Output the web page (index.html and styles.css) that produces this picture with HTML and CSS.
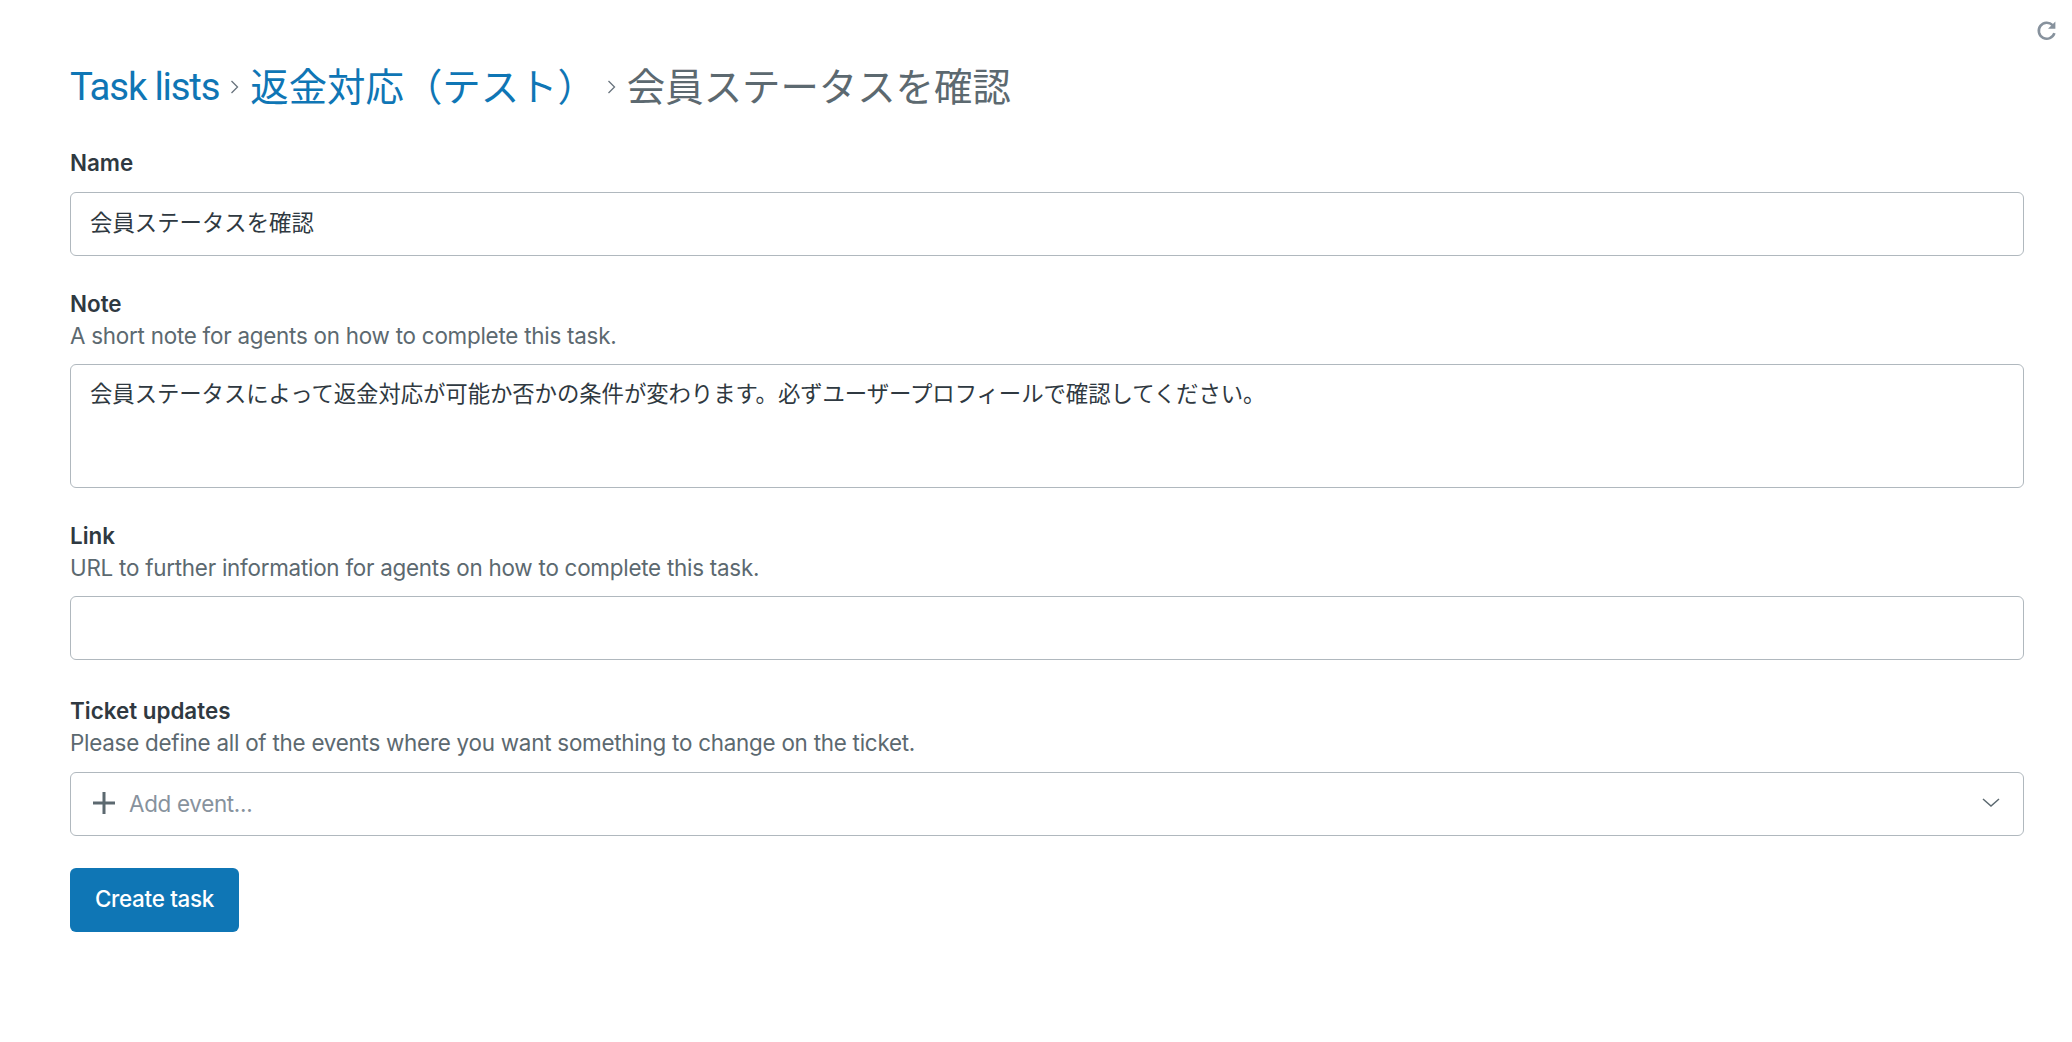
FILE: index.html
```html
<!DOCTYPE html>
<html lang="ja">
<head>
<meta charset="utf-8">
<title>会員ステータスを確認</title>
<link rel="stylesheet" href="styles.css">
</head>
<body>
<button class="refresh" type="button" aria-label="Refresh">
  <svg width="22" height="22" viewBox="0 0 22 22" fill="none" stroke="#87929d" stroke-width="2.6"><path d="M18.4 13.2A8 8 0 1 1 16.6 5.2"/><path d="M19.4 1.4v7.4h-7.4z" fill="#87929d" stroke="none"/></svg>
</button>
<main class="page">
  <nav class="crumbs">
    <a href="#" class="latin">Task lists</a>
    <svg class="sep" width="12" height="22" viewBox="0 0 12 22" fill="none" stroke="#68737d" stroke-width="1.3"><path d="M2.5 5l6 6-6 6"/></svg>
    <a href="#">返金対応（テスト）</a>
    <svg class="sep" width="12" height="22" viewBox="0 0 12 22" fill="none" stroke="#68737d" stroke-width="1.3"><path d="M2.5 5l6 6-6 6"/></svg>
    <span class="current">会員ステータスを確認</span>
  </nav>
  <form class="form">
    <div class="field field-first">
      <label class="label" for="name">Name</label>
      <input class="control" id="name" type="text" value="会員ステータスを確認">
    </div>
    <div class="field">
      <label class="label" for="note">Note</label>
      <p class="hint">A short note for agents on how to complete this task.</p>
      <textarea class="control area" id="note">会員ステータスによって返金対応が可能か否かの条件が変わります。必ずユーザープロフィールで確認してください。</textarea>
    </div>
    <div class="field field-link">
      <label class="label" for="link">Link</label>
      <p class="hint">URL to further information for agents on how to complete this task.</p>
      <input class="control" id="link" type="text">
    </div>
    <div class="field field-events">
      <span class="label">Ticket updates</span>
      <p class="hint">Please define all of the events where you want something to change on the ticket.</p>
      <div class="control select">
        <svg width="22" height="22" viewBox="0 0 22 22" fill="none" stroke="#5c6970" stroke-width="3"><path d="M11 0v22M0 11h22"/></svg>
        <span class="placeholder">Add event...</span>
        <svg class="chev" width="18" height="10" viewBox="0 0 18 10" fill="none" stroke="#5c6970" stroke-width="1.5"><path d="M1 1l8 7 8-7"/></svg>
      </div>
    </div>
    <button class="submit" type="button">Create task</button>
  </form>
</main>
</body>
</html>
```
FILE: styles.css
```css
* { box-sizing: border-box; }
html, body { margin: 0; background: #fff; }
body { font-family: Inter, "Noto Sans CJK JP", sans-serif; font-size: 22.4px; color: #2f3941; }
.refresh { position: absolute; top: 20px; right: 14px; width: 22px; height: 22px; padding: 0; border: 0; background: none; }
.refresh svg { display: block; }
.page { padding: 60px 48px 0 70px; }
.crumbs { display: flex; align-items: center; height: 54px; font-size: 38.4px; line-height: 54px; white-space: nowrap; }
.crumbs a { color: #0f76b5; text-decoration: none; }
.crumbs .latin { font-family: Roboto, sans-serif; letter-spacing: -1.2px; }
.sep { margin: 0 9px 0 10px; }
.current { color: #5c6970; }
.form { margin-top: 33px; display: flex; flex-direction: column; align-items: stretch; }
.field { margin-bottom: 32px; display: flex; flex-direction: column; }
.field-first .control { margin-top: 13px; padding-bottom: 6px; }
.field-link { margin-bottom: 35px; }
.label { font-weight: 600; font-size: 22.4px; line-height: 32px; color: #2f3941; }
.hint { margin: 0; line-height: 32px; color: #5c6970; letter-spacing: -0.24px; }
.control { display: block; width: 100%; height: 64px; margin-top: 12px; padding: 0 19px; border: 1.4px solid #b0b8be; border-radius: 6px; background: #fff; font: inherit; color: #2f3941; outline: none; }
.hint + .control { margin-top: 12px; }
.field-events .hint + .control { margin-top: 13px; }
.area { height: 124px; padding: 13px 19px; line-height: 32px; letter-spacing: -0.07px; resize: none; overflow: hidden; }
.select { display: flex; align-items: center; gap: 14px; padding-left: 22px; padding-bottom: 2px; }
.placeholder { color: #87929d; letter-spacing: -0.3px; }
.chev { margin-left: auto; margin-right: 4px; }
.submit { align-self: flex-start; width: 169px; height: 64px; padding: 0 0 3px; border: 0; border-radius: 6px; background: #0f76b5; color: #fff; font: inherit; font-weight: 500; letter-spacing: -0.3px; }
```
